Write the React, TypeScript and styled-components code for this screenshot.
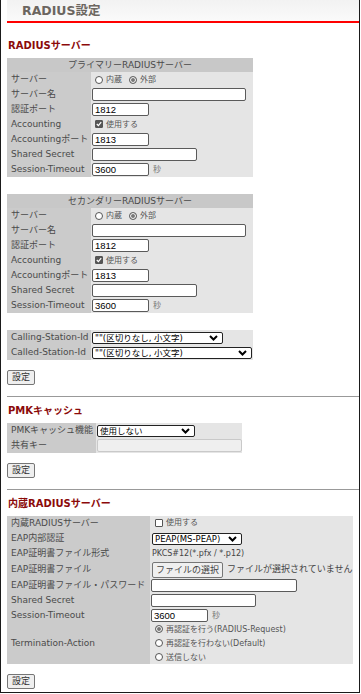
import styled, { createGlobalStyle } from 'styled-components'

const GlobalStyle = createGlobalStyle`
  html, body {
    margin: 0;
    padding: 0;
    background: #fff;
  }
  body {
    font-family: "DejaVu Sans", "Noto Sans CJK JP", sans-serif;
  }
`

const Frame = styled.div`
  box-sizing: border-box;
  width: 360px;
  height: 693px;
  border: 1px solid #1a1a1a;
  border-top: none;
  padding-left: 6px;
  overflow: hidden;
`

const PageHeader = styled.h1`
  margin: 0;
  height: 21px;
  padding-left: 15px;
  border-bottom: 2px solid #f00;
  background: linear-gradient(#f2f2f2, #fafafa);
  font-size: 12.5px;
  font-weight: bold;
  line-height: 21px;
  color: #6c6660;
`

const Section = styled.section<{ $top: number }>`
  display: flex;
  flex-direction: column;
  align-items: flex-start;
  padding-top: ${(p) => p.$top}px;
`

const SectionTitle = styled.h2`
  margin: 0 0 5px 1px;
  font-size: 10px;
  font-weight: bold;
  line-height: 14px;
  color: #8b0a0a;
`

const Divider = styled.hr`
  margin: 0;
  border: none;
  height: 1px;
  background: #999;
`

const FormTable = styled.table<{ $width: number; $after: number }>`
  width: ${(p) => p.$width}px;
  table-layout: fixed;
  border-collapse: collapse;
  border-spacing: 0;
  margin-bottom: ${(p) => p.$after}px;
  font-size: 9px;
  color: #4a4a4a;
`

const Col = styled.col<{ $w: number }>`
  width: ${(p) => p.$w}px;
`

const Row = styled.tr<{ $h?: number }>`
  height: ${(p) => p.$h ?? 15}px;
`

const HeadCell = styled.th`
  height: 14px;
  padding: 0;
  background: #c8c8c8;
  font-weight: normal;
  text-align: center;
  line-height: 14px;
  color: #4a4a4a;
`

const LabelCell = styled.td`
  padding: 0 0 0 4px;
  background: #cbcbcb;
  white-space: nowrap;
  line-height: 13px;
  vertical-align: middle;
  overflow: visible;
`

const ValueCell = styled.td<{ $pad?: number }>`
  padding: 0 0 0 ${(p) => p.$pad ?? 1}px;
  background: #e5e5e5;
  white-space: nowrap;
  line-height: 13px;
  vertical-align: middle;
`

const TextInput = styled.input<{ $w: number }>`
  box-sizing: border-box;
  display: inline-block;
  width: ${(p) => p.$w}px;
  height: 13px;
  margin: 0;
  padding: 0 2px;
  border: 1px solid #5a5a5a;
  border-radius: 2px;
  background: #fff;
  font: 9.5px "Liberation Sans", "Noto Sans CJK JP", sans-serif;
  color: #000;
  vertical-align: middle;
  outline: none;

  &:disabled {
    border-color: #c9c9c9;
    background: #efefef;
  }
`

const Unit = styled.span`
  margin-left: 4px;
  font-size: 8px;
  color: #777;
  vertical-align: middle;
`

const SelectBox = styled.span<{ $w: number }>`
  position: relative;
  display: inline-block;
  width: ${(p) => p.$w}px;
  height: 12px;
  vertical-align: middle;
`

const SelectField = styled.select`
  box-sizing: border-box;
  appearance: none;
  display: block;
  width: 100%;
  height: 12px;
  margin: 0;
  padding: 0 0 0 2px;
  border: 1px solid #222;
  border-radius: 2px;
  background: #fff;
  font: 8.5px "DejaVu Sans", "Noto Sans CJK JP", sans-serif;
  line-height: 10px;
  color: #000;
  outline: none;
`

const Chevron = styled.svg`
  position: absolute;
  right: 5px;
  top: 3px;
  pointer-events: none;
`

const OptionGroup = styled.span<{ $column?: boolean }>`
  display: inline-flex;
  flex-direction: ${(p) => (p.$column ? 'column' : 'row')};
  align-items: ${(p) => (p.$column ? 'flex-start' : 'center')};
  gap: ${(p) => (p.$column ? 0 : 7)}px;
  vertical-align: middle;
`

const Option = styled.label<{ $h?: number }>`
  display: inline-flex;
  align-items: center;
  gap: 3px;
  height: ${(p) => p.$h ?? 13}px;
  font-size: 8px;
  color: #555;
`

const RadioMark = styled.span<{ $on?: boolean }>`
  box-sizing: border-box;
  display: inline-block;
  width: 8px;
  height: 8px;
  border-radius: 50%;
  border: 1px solid ${(p) => (p.$on ? '#666' : '#555')};
  background: ${(p) => (p.$on ? '#777' : '#fff')};
  box-shadow: ${(p) => (p.$on ? 'inset 0 0 0 1px #fff' : 'none')};
`

const CheckMark = styled.span<{ $on?: boolean }>`
  box-sizing: border-box;
  display: inline-flex;
  align-items: center;
  justify-content: center;
  width: 8px;
  height: 8px;
  border-radius: 1px;
  border: 1px solid #555;
  background: ${(p) => (p.$on ? '#555' : '#fff')};
`

const SubmitButton = styled.button`
  box-sizing: border-box;
  display: block;
  width: 28px;
  height: 15px;
  margin: 0 0 11px;
  padding: 0;
  border: 1px solid #767676;
  border-radius: 2px;
  background: #efefef;
  font: 9px "DejaVu Sans", "Noto Sans CJK JP", sans-serif;
  line-height: 13px;
  color: #333;
`

const FileButton = styled.button`
  box-sizing: border-box;
  width: 71px;
  height: 16px;
  margin: 0;
  padding: 0;
  border: 1px solid #767676;
  border-radius: 2px;
  background: #efefef;
  font: 9px "DejaVu Sans", "Noto Sans CJK JP", sans-serif;
  color: #444;
  vertical-align: middle;
`

const FileState = styled.span`
  margin-left: 4px;
  font-size: 9px;
  color: #444;
  vertical-align: middle;
`

const Note = styled.span`
  font-size: 8px;
  color: #444;
`

function Select({ width, value }: { width: number; value: string }) {
  return (
    <SelectBox $w={width}>
      <SelectField defaultValue={value}>
        <option>{value}</option>
      </SelectField>
      <Chevron width="9" height="6" viewBox="0 0 9 6">
        <path d="M1 1 L4.5 4.5 L8 1" fill="none" stroke="#000" strokeWidth="2" />
      </Chevron>
    </SelectBox>
  )
}

function Radio({ on, children, h }: { on?: boolean; children: string; h?: number }) {
  return (
    <Option $h={h}>
      <RadioMark $on={on} />
      {children}
    </Option>
  )
}

function Check({ on, children }: { on?: boolean; children: string }) {
  return (
    <Option>
      <CheckMark $on={on}>
        {on && (
          <svg width="6" height="6" viewBox="0 0 6 6">
            <path d="M0.8 3 L2.4 4.6 L5.2 1.2" fill="none" stroke="#fff" strokeWidth="1.3" />
          </svg>
        )}
      </CheckMark>
      {children}
    </Option>
  )
}

function ServerTable({ title }: { title: string }) {
  return (
    <FormTable $width={246} $after={17}>
      <colgroup>
        <Col $w={84} />
        <Col $w={162} />
      </colgroup>
      <tbody>
        <tr>
          <HeadCell colSpan={2}>{title}</HeadCell>
        </tr>
        <Row>
          <LabelCell>サーバー</LabelCell>
          <ValueCell $pad={4}>
            <OptionGroup>
              <Radio>内蔵</Radio>
              <Radio on>外部</Radio>
            </OptionGroup>
          </ValueCell>
        </Row>
        <Row>
          <LabelCell>サーバー名</LabelCell>
          <ValueCell>
            <TextInput $w={154} defaultValue="" />
          </ValueCell>
        </Row>
        <Row>
          <LabelCell>認証ポート</LabelCell>
          <ValueCell>
            <TextInput $w={57} defaultValue="1812" />
          </ValueCell>
        </Row>
        <Row>
          <LabelCell>Accounting</LabelCell>
          <ValueCell $pad={4}>
            <Check on>使用する</Check>
          </ValueCell>
        </Row>
        <Row>
          <LabelCell>Accountingポート</LabelCell>
          <ValueCell>
            <TextInput $w={57} defaultValue="1813" />
          </ValueCell>
        </Row>
        <Row>
          <LabelCell>Shared Secret</LabelCell>
          <ValueCell>
            <TextInput $w={105} type="password" defaultValue="" />
          </ValueCell>
        </Row>
        <Row>
          <LabelCell>Session-Timeout</LabelCell>
          <ValueCell>
            <TextInput $w={57} defaultValue="3600" />
            <Unit>秒</Unit>
          </ValueCell>
        </Row>
      </tbody>
    </FormTable>
  )
}

export default function App() {
  return (
    <>
      <GlobalStyle />
      <Frame>
        <PageHeader>RADIUS設定</PageHeader>

        <Section $top={16}>
          <SectionTitle>RADIUSサーバー</SectionTitle>
          <ServerTable title="プライマリーRADIUSサーバー" />
          <ServerTable title="セカンダリーRADIUSサーバー" />
          <FormTable $width={246} $after={10}>
            <colgroup>
              <Col $w={84} />
              <Col $w={162} />
            </colgroup>
            <tbody>
              <Row>
                <LabelCell>Calling-Station-Id</LabelCell>
                <ValueCell>
                  <Select width={131} value={'""(区切りなし, 小文字)'} />
                </ValueCell>
              </Row>
              <Row>
                <LabelCell>Called-Station-Id</LabelCell>
                <ValueCell>
                  <Select width={160} value={'""(区切りなし, 小文字)'} />
                </ValueCell>
              </Row>
            </tbody>
          </FormTable>
          <SubmitButton>設定</SubmitButton>
        </Section>
        <Divider />

        <Section $top={7}>
          <SectionTitle>PMKキャッシュ</SectionTitle>
          <FormTable $width={235} $after={10}>
            <colgroup>
              <Col $w={89} />
              <Col $w={146} />
            </colgroup>
            <tbody>
              <Row>
                <LabelCell>PMKキャッシュ機能</LabelCell>
                <ValueCell>
                  <Select width={98} value="使用しない" />
                </ValueCell>
              </Row>
              <Row>
                <LabelCell>共有キー</LabelCell>
                <ValueCell>
                  <TextInput $w={145} disabled defaultValue="" />
                </ValueCell>
              </Row>
            </tbody>
          </FormTable>
          <SubmitButton>設定</SubmitButton>
        </Section>
        <Divider />

        <Section $top={7}>
          <SectionTitle>内蔵RADIUSサーバー</SectionTitle>
          <FormTable $width={346} $after={10}>
            <colgroup>
              <Col $w={143} />
              <Col $w={203} />
            </colgroup>
            <tbody>
              <Row>
                <LabelCell>内蔵RADIUSサーバー</LabelCell>
                <ValueCell $pad={5}>
                  <Check>使用する</Check>
                </ValueCell>
              </Row>
              <Row>
                <LabelCell>EAP内部認証</LabelCell>
                <ValueCell $pad={2}>
                  <Select width={90} value="PEAP(MS-PEAP)" />
                </ValueCell>
              </Row>
              <Row>
                <LabelCell>EAP証明書ファイル形式</LabelCell>
                <ValueCell $pad={2}>
                  <Note>PKCS#12(*.pfx / *.p12)</Note>
                </ValueCell>
              </Row>
              <Row $h={17}>
                <LabelCell>EAP証明書ファイル</LabelCell>
                <ValueCell $pad={2}>
                  <FileButton>ファイルの選択</FileButton>
                  <FileState>ファイルが選択されていません</FileState>
                </ValueCell>
              </Row>
              <Row>
                <LabelCell>EAP証明書ファイル・パスワード</LabelCell>
                <ValueCell>
                  <TextInput $w={146} type="password" defaultValue="" />
                </ValueCell>
              </Row>
              <Row>
                <LabelCell>Shared Secret</LabelCell>
                <ValueCell>
                  <TextInput $w={105} type="password" defaultValue="" />
                </ValueCell>
              </Row>
              <Row $h={14}>
                <LabelCell>Session-Timeout</LabelCell>
                <ValueCell>
                  <TextInput $w={57} defaultValue="3600" />
                  <Unit>秒</Unit>
                </ValueCell>
              </Row>
              <Row $h={42}>
                <LabelCell>Termination-Action</LabelCell>
                <ValueCell $pad={5}>
                  <OptionGroup $column>
                    <Radio on h={14}>再認証を行う(RADIUS-Request)</Radio>
                    <Radio h={14}>再認証を行わない(Default)</Radio>
                    <Radio h={14}>送信しない</Radio>
                  </OptionGroup>
                </ValueCell>
              </Row>
            </tbody>
          </FormTable>
          <SubmitButton>設定</SubmitButton>
        </Section>
      </Frame>
    </>
  )
}
